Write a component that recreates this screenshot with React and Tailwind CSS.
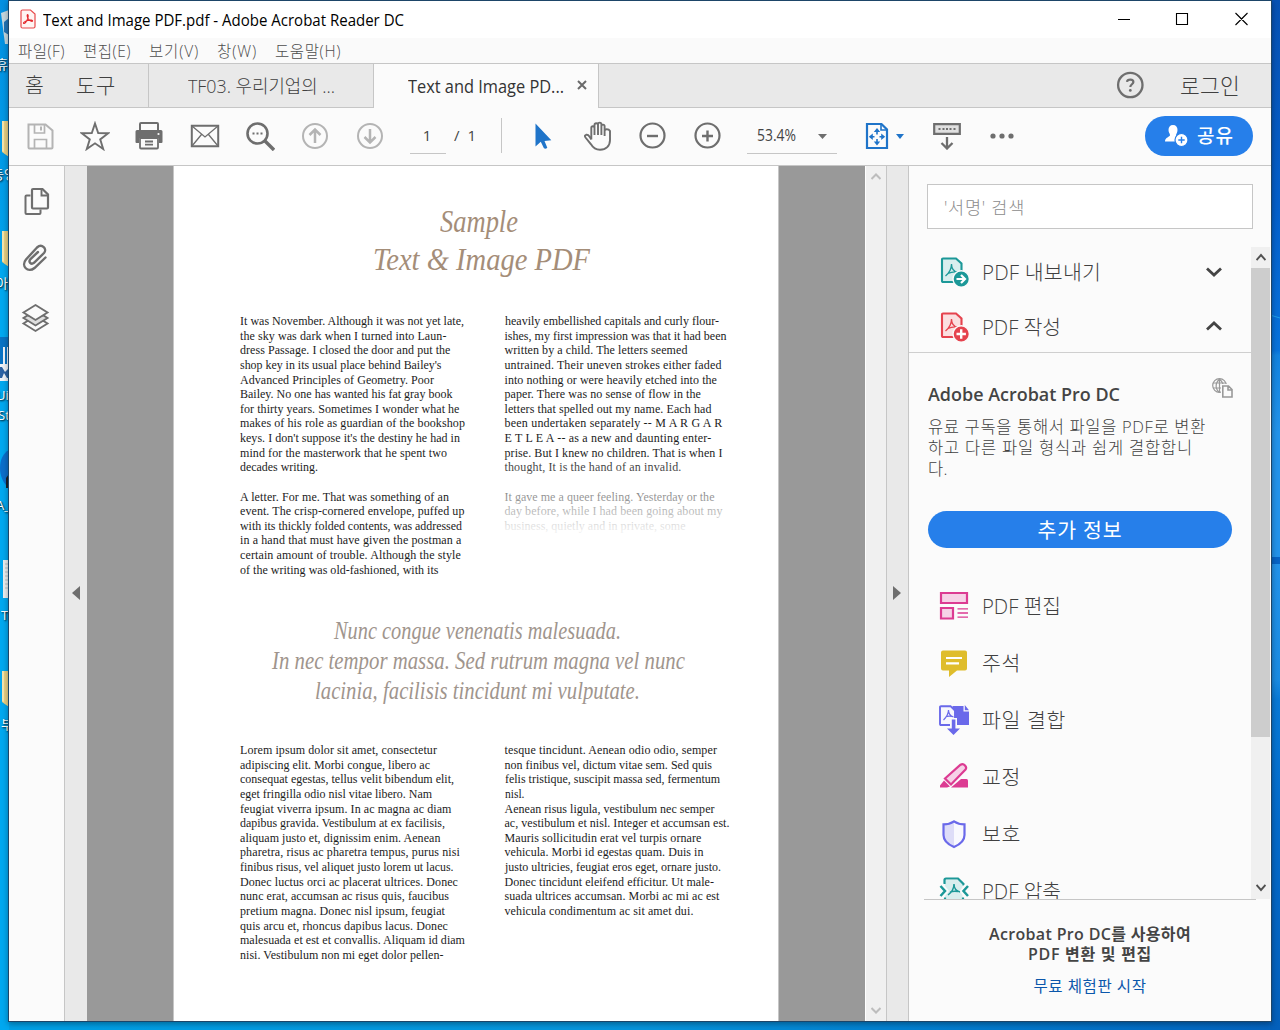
import { useLayoutEffect, useRef, useState } from "react";

/* Single line of text fitted to `w` pixels: tracked out when short, condensed when long. */
function T({ w, className = "", children }) {
  const ref = useRef(null);
  const [style, setStyle] = useState({});
  useLayoutEffect(() => {
    const natural = ref.current.getBoundingClientRect().width;
    if (natural > w) {
      setStyle({ width: w + "px", transform: `scaleX(${w / natural})` });
    } else {
      setStyle({ letterSpacing: (w - natural) / String(children).length + "px" });
    }
  }, []);
  return (
    <span ref={ref} className={"inline-block shrink-0 origin-left whitespace-pre " + className} style={style}>
      {children}
    </span>
  );
}

function Svg({ s = 30, className = "", children }) {
  return (
    <svg width={s} height={s} viewBox={`0 0 ${s} ${s}`} fill="none" className={"shrink-0 " + className}>
      {children}
    </svg>
  );
}

function Slot({ children }) {
  return <div className="flex w-[55px] shrink-0 justify-center">{children}</div>;
}

const Acro = ({ c, t, sw = 1.3 }) => (
  <path transform={t} d="M5.6 0.8c1.2 0 .9 3.2-.2 5.7C4.300 9 2 12 .9 11.600c-1.200-.6 1-2.900 4.800-3.800 3.500-.8 6.400-.4 6 .8-.5 1.200-3.600-.3-5.300-2.700C5 4 4.600.8 5.600.8z" stroke={c} strokeWidth={sw} />
);

function Desktop() {
  const label = "absolute whitespace-pre text-[13px] leading-[16px] text-white [text-shadow:1px_1px_2px_#000]";
  return (
    <div className="absolute inset-y-0 left-0 w-[9px] overflow-hidden bg-[#00a8f0]">
      <div className="absolute left-0 top-0 h-[260px] w-[9px] bg-linear-to-b from-[#0490e2] to-[#00a2ec]" />
      <svg className="absolute left-0 top-0" width="9" height="740" viewBox="0 0 9 740">
        <path d="M1 13l8-3v34H5z" fill="#c6d8df" />
        <path d="M4 22l5-4v17l-5-3z" fill="#2375b8" />
        <path d="M2 121h7v36l-7-5zM2 231h7v36l-7-5zM2 671h7v36l-7-5z" fill="#e8d083" />
        <path d="M2 121h2v31l-2-1zM2 231h2v31l-2-1zM2 671h2v31l-2-1z" fill="#f4e6b0" />
        <path d="M0 337h9v44H0z" fill="#0873c4" />
        <path d="M3 347h2v18H3zM7 347h2v18H7zM0 364h9v17H0z" fill="#eef3f8" />
        <path d="M0 367h2l3 5 4-4v10H7l-3-5-2 5H0z" fill="#2b62a3" />
        <path d="M9 450c-6 3-9 10-9 18s3 14 7 18h2z" fill="#0b6fcb" />
        <path d="M6 478l3-4v14H6z" fill="#1c2227" />
        <path d="M3 560h6v38H3z" fill="#eceff0" />
        <path d="M5 564h4M5 568h4M5 572h4M5 576h4M5 580h4M5 584h4M5 588h4" stroke="#b9c0c4" />
      </svg>
      <span className={label + " left-[-4px] top-[56px] font-['Noto_Sans_CJK_KR',sans-serif]"}>휴</span>
      <span className={label + " left-[-8px] top-[166px] font-['Noto_Sans_CJK_KR',sans-serif]"}>동영</span>
      <span className={label + " left-[-4px] top-[275px] font-['Noto_Sans_CJK_KR',sans-serif]"}>아</span>
      <span className={label + " left-[-4px] top-[387px] font-['Open_Sans',sans-serif]"}>Ui</span>
      <span className={label + " left-[-2px] top-[407px] font-['Open_Sans',sans-serif]"}>St</span>
      <span className={label + " left-[-4px] top-[497px] font-['Open_Sans',sans-serif]"}>A_</span>
      <span className={label + " left-[1px] top-[607px] font-['Open_Sans',sans-serif]"}>T</span>
      <span className={label + " left-[1px] top-[716px] font-['Noto_Sans_CJK_KR',sans-serif]"}>부</span>
    </div>
  );
}

function Wallpaper() {
  return (
    <svg className="absolute right-0 top-0" width="10" height="1030" viewBox="0 0 10 1030">
      <defs>
        <linearGradient id="wall" x1="0" y1="0" x2="0" y2="1">
          <stop offset="0" stopColor="#0752b4" />
          <stop offset=".2" stopColor="#0460cb" />
          <stop offset=".34" stopColor="#0873dc" />
          <stop offset=".345" stopColor="#1283e0" />
          <stop offset=".42" stopColor="#2393ea" />
          <stop offset=".54" stopColor="#2393ea" />
          <stop offset=".66" stopColor="#1a8be2" />
          <stop offset=".68" stopColor="#0879d6" />
          <stop offset=".8" stopColor="#046bcb" />
          <stop offset="1" stopColor="#0460bb" />
        </linearGradient>
      </defs>
      <path d="M0 0h10v1030H0z" fill="url(#wall)" />
      <path d="M0 557h10v7H0z" fill="#0764c6" />
      <path d="M0 315l10 3" stroke="#1fa0ea" />
    </svg>
  );
}

function TitleBar() {
  return (
    <div className="flex h-[37px] items-center bg-white">
      <svg width="16" height="20" viewBox="0 0 16 20" fill="none" className="ml-[11px] -translate-y-px">
        <path d="M2.500 1h8L15 5v12.500q0 1.500-1.500 1.500h-11Q1 19 1 17.500v-15Q1 1 2.500 1z" fill="#fff4f2" stroke="#e8494a" strokeWidth="1.200" />
        <Acro c="#e4282c" t="translate(3 5) scale(.82)" sw={1.3} />
      </svg>
      <T w={361} className="ml-[7px] text-[16px] leading-[24px] text-black">Text and Image PDF.pdf - Adobe Acrobat Reader DC</T>
      <svg width="132" height="14" viewBox="0 0 132 14" fill="none" stroke="#000" className="ml-auto mr-[22px] -translate-y-px">
        <path d="M1 7.500h12M59.500 1.500h11v11h-11zM118.500 1l12 12M130.500 1l-12 12" strokeWidth="1.100" />
      </svg>
    </div>
  );
}

function MenuBar() {
  const c = "text-[15.5px] leading-[24px] text-[#4d4d4d] font-light";
  return (
    <div className="flex h-[25px] items-center gap-[18px] bg-[#fafafa] pl-[9px]">
      <T w={47} className={c}>파일(F)</T>
      <T w={48} className={c}>편집(E)</T>
      <T w={50} className={c}>보기(V)</T>
      <T w={40} className={c}>창(W)</T>
      <T w={66} className={c}>도움말(H)</T>
    </div>
  );
}

function Tabs() {
  return (
    <div className="flex h-[45px] border-t border-[#c6c6c6] bg-[#e9e9e9] text-[#404040]">
      <div className="flex w-[140px] items-start border-r border-b border-[#c6c6c6] pt-[6px] pl-[16px]">
        <T w={20} className="text-[20.5px] leading-[30px] font-light">홈</T>
        <T w={40} className="ml-[31px] text-[21px] leading-[30px] font-light">도구</T>
      </div>
      <div className="flex w-[225px] items-center border-r border-b border-[#c6c6c6] pl-[39px]">
        <T w={147} className="text-[18px] leading-[24px] font-light">TF03. 우리기업의 ...</T>
      </div>
      <div className="flex w-[225px] items-center border-r border-[#c6c6c6] bg-[#fbfbfb] pl-[34px]">
        <T w={156} className="text-[17.500px] leading-[24px] text-[#333]">Text and Image PD...</T>
        <svg width="10" height="10" viewBox="0 0 10 10" stroke="#6a6a6a" strokeWidth="2" className="ml-[13px] -translate-y-px">
          <path d="M1 1l8 8M9 1L1 9" />
        </svg>
      </div>
      <div className="flex flex-1 items-center border-b border-[#c6c6c6]">
        <Svg s={28} className="ml-[517px] -translate-y-px">
          <circle cx="14.300" cy="14" r="12.200" stroke="#6e6e6e" strokeWidth="2.300" />
          <path d="M11 10.800c.4-2.800 6.400-2.900 6.400.3 0 2.100-3.100 2.300-3.100 4.900" stroke="#6e6e6e" strokeWidth="2.200" />
          <circle cx="14.300" cy="19.400" r="1.400" fill="#6e6e6e" />
        </Svg>
        <T w={60} className="ml-[36px] text-[21.500px] leading-[30px] font-light">로그인</T>
      </div>
    </div>
  );
}

const G = "#6e6e6e";
const L = "#b4b4b4";
const B = "#1f74c9";

function Toolbar() {
  return (
    <div className="flex h-[58px] items-center border-b border-[#c6c6c6] bg-[#fbfbfb] pb-[2px] pl-[3px]">
      <Slot>
        <Svg>
          <path d="M3.500 3.500h17l7 6v17q0 1-1 1h-22q-1 0-1-1z" stroke={L} strokeWidth="2" />
          <path d="M9.500 3.500v8.500h10V3.500M9.500 27v-8.500h12V27" stroke={L} strokeWidth="1.700" />
          <path d="M15 5.500h2v4h-2z" fill={L} />
        </Svg>
      </Slot>
      <Slot>
        <Svg>
          <path d="M15 2.500l3.200 9.500 10 .2-8 6.200 3 9.600-8.200-5.700L6.800 28l3-9.600-8-6.200 10-.2z" stroke={G} strokeWidth="1.900" />
        </Svg>
      </Slot>
      <Slot>
        <Svg className="-translate-x-px">
          <path d="M6 9V3q0-1 1-1h16q1 0 1 1v6" stroke={G} strokeWidth="2" />
          <path d="M3 9h24q1.500 0 1.500 1.500V21q0 1-1 1H25v-5H5v5H2.500q-1 0-1-1V10.500Q1.500 9 3 9z" fill={G} />
          <path d="M6 17v9.500q0 1 1 1h16q1 0 1-1V17zM11 20.500h8M11 23.700h8" stroke={G} strokeWidth="1.800" />
          <circle cx="24.500" cy="13" r="1.100" fill="#fbfbfb" />
        </Svg>
      </Slot>
      <Slot>
        <Svg>
          <path d="M1.800 4.800h26.400v20.400H1.800z" stroke={G} strokeWidth="2" />
          <path d="M2 5l13 11L28 5M2 25l9.500-11.500M28 25l-9.500-11.500" stroke={G} strokeWidth="1.300" />
        </Svg>
      </Slot>
      <Slot>
        <Svg>
          <circle cx="12.500" cy="12.500" r="10" stroke={G} strokeWidth="2.600" />
          <path d="M20 20l9 9" stroke={G} strokeWidth="3.400" />
          <path d="M7.500 12.500h2M11.500 12.500h2M15.500 12.500h2" stroke={G} strokeWidth="2" />
        </Svg>
      </Slot>
      <Slot>
        <Svg>
          <circle cx="15" cy="15" r="12" stroke={L} strokeWidth="2" />
          <path d="M15 22V9M9.500 14l5.500-5.500 5.500 5.500" stroke={L} strokeWidth="2.500" />
        </Svg>
      </Slot>
      <Slot>
        <Svg>
          <circle cx="15" cy="15" r="12" stroke={L} strokeWidth="2" />
          <path d="M15 8v13M9.500 16l5.500 5.500 5.500-5.500" stroke={L} strokeWidth="2.500" />
        </Svg>
      </Slot>
      <div className="ml-[13px] mt-[4px] flex h-[33px] w-[36px] items-center justify-center border-b border-[#c6c6c6] pr-[2px] pb-[3px] text-[15px] text-[#444]">1</div>
      <T w={22} className="ml-[8px] text-[15px] text-[#444]">{"/  1"}</T>
      <div className="ml-[25px] h-[35px] w-px bg-[#c6c6c6]" />
      <div className="ml-[13px] flex">
        <Slot>
          <Svg>
            <path d="M7.500 2.500v23l5.300-4.700 3 6.200q1.500 1.500 3.500-.2l-2.800-6.700 6.800-.8z" fill={B} />
          </Svg>
        </Slot>
        <Slot>
          <Svg>
            <path d="M8.300 18.500V7q0-1.700 1.600-1.700T11.500 7v7M11.500 14V4q0-1.700 1.700-1.700T15 4v10M15 14V3.200q0-1.600 1.700-1.600t1.700 1.600V14M18.400 14V5.200q0-1.600 1.600-1.600t1.600 1.600V15M21.600 10q0-1.800 2.200-1.800T27 10v9c0 6-4 9.800-10 9.800-4.500 0-7-2-9-5.500L2.500 16.500q-1.500-2 .6-2.700 2-.4 3.300 1.700l2 3" stroke={G} strokeWidth="1.900" />
          </Svg>
        </Slot>
        <Slot>
          <Svg>
            <circle cx="14.500" cy="14.500" r="12" stroke={G} strokeWidth="2.200" />
            <path d="M9 15h11" stroke={G} strokeWidth="2.400" />
          </Svg>
        </Slot>
        <Slot>
          <Svg>
            <circle cx="14.500" cy="14.500" r="12" stroke={G} strokeWidth="2.200" />
            <path d="M9 15h11M14.500 9.500v11" stroke={G} strokeWidth="2.400" />
          </Svg>
        </Slot>
      </div>
      <div className="ml-[12px] mt-[4px] flex h-[33px] w-[90px] items-center border-b border-[#c6c6c6] pb-[2px] pl-[10px]">
        <T w={39} className="text-[15.500px] text-[#444]">53.4%</T>
        <svg width="9" height="5" viewBox="0 0 9 5" className="ml-[22px]"><path d="M0 0h9L4.500 5z" fill={G} /></svg>
      </div>
      <svg width="24" height="28" viewBox="0 0 24 28" fill="none" className="ml-[28px]">
        <path d="M2 2h14.500L22 7.500V26H2z" stroke={B} strokeWidth="2.200" />
        <path d="M16 2v6h6" stroke={B} strokeWidth="1.600" />
        <path d="M12 8v4.500M12 17v4M5 14.800h4.500M14.500 14.800H19" stroke={B} strokeWidth="1.600" />
        <path d="M12 6l3.200 4H8.800zM12 23.500l3.200-4H8.800zM3.800 14.800l4-3.200v6.400zM20.200 14.800l-4-3.200v6.400z" fill={B} />
      </svg>
      <svg width="8" height="5" viewBox="0 0 8 5" className="ml-[7px] translate-y-px"><path d="M0 0h8L4 5z" fill={B} /></svg>
      <svg width="28" height="28" viewBox="0 0 28 28" fill="none" className="ml-[29px]">
        <path d="M1.200 2.200h25.600v9.600H1.200z" fill="#e0e0e0" stroke={G} strokeWidth="2.200" />
        <path d="M5.500 7h2M9.500 7h2M13 7h2M16.500 7h2M20.500 7h2" stroke={G} strokeWidth="2" />
        <path d="M14 15v11M8.500 21l5.500 5.500 5.500-5.500" stroke={G} strokeWidth="2.300" />
      </svg>
      <svg width="24" height="6" viewBox="0 0 24 6" className="ml-[29px]" fill={G}>
        <circle cx="3" cy="3" r="2.600" /><circle cx="12" cy="3" r="2.600" /><circle cx="21" cy="3" r="2.600" />
      </svg>
      <div className="ml-[131px] flex h-[40px] w-[108px] items-center rounded-full bg-[#267fea] pl-[20px]">
        <svg width="24" height="24" viewBox="0 0 24 24">
          <path d="M8 1c3 0 4.500 2 4.500 5 0 2.500-1.500 4-1.500 5.500 0 1.800 4.500 2 4.500 6H0c0-4.500 5-4.500 5-6.300C5 9.500 3.500 8.500 3.500 6 3.500 3 5 1 8 1z" fill="#fff" />
          <circle cx="16.500" cy="16" r="6.500" fill="#fff" stroke="#267fea" strokeWidth="1.200" />
          <path d="M16.500 12.800v6.400M13.300 16h6.400" stroke="#267fea" strokeWidth="1.400" />
        </svg>
        <T w={37} className="ml-[8px] text-[19px] leading-[28px] font-medium text-white">공유</T>
      </div>
    </div>
  );
}

function LeftRail() {
  return (
    <div className="flex w-[56px] shrink-0 flex-col items-start border-r border-[#c6c6c6] bg-[#fbfbfb] pl-[12px] pt-[21px]">
      <Svg>
        <path d="M9.500 8.500H5.500q-1 0-1 1V26q0 1 1 1h13q1 0 1-1v-3.500" stroke={G} strokeWidth="2" />
        <path d="M12 2h9.500l5.500 5.500v13q0 1-1 1H12q-1 0-1-1V3q0-1 1-1z" fill="#fbfbfb" stroke={G} strokeWidth="2.200" />
        <path d="M20.500 2v6.500H27" stroke={G} strokeWidth="1.900" />
      </Svg>
      <Svg className="mt-[25px] -translate-x-px">
        <path d="M25.500 15.500L14.500 26c-6.500 5.500-14-2-8.500-8.500L17 5.500c5-4.500 10.500 1.500 7 5.500L14 20.800c-3 2.200-6-.8-3.500-3.800l7.500-7" stroke={G} strokeWidth="2.400" strokeLinecap="round" />
      </Svg>
      <Svg className="mt-[31px] -translate-x-px">
        <path d="M3.500 20.500L15.500 28l12-7.500-4-2.500h-16z" fill="#fbfbfb" stroke={G} strokeWidth="1.900" />
        <path d="M3.500 15L15.500 22.500l12-7.500-4-2.500h-16z" fill="#dedede" stroke={G} strokeWidth="1.900" />
        <path d="M15.500 2l12 7.500-12 7.500-12-7.500z" fill="#fbfbfb" stroke={G} strokeWidth="1.900" />
      </Svg>
    </div>
  );
}

const TOP_LEFT = [
  ["It was November. Although it was not yet late,", 224],
  ["the sky was dark when I turned into Laun-", 206.5],
  ["dress Passage. I closed the door and put the", 210.5],
  ["shop key in its usual place behind Bailey's", 201.5],
  ["Advanced Principles of Geometry. Poor", 194],
  ["Bailey. No one has wanted his fat gray book", 212.5],
  ["for thirty years. Sometimes I wonder what he", 219.5],
  ["makes of his role as guardian of the bookshop", 225],
  ["keys. I don't suppose it's the destiny he had in", 220],
  ["mind for the masterwork that he spent two", 207],
  ["decades writing.", 78],
  ["", 0],
  ["A letter. For me. That was something of an", 209],
  ["event. The crisp-cornered envelope, puffed up", 224.5],
  ["with its thickly folded contents, was addressed", 222],
  ["in a hand that must have given the postman a", 221.5],
  ["certain amount of trouble. Although the style", 221],
  ["of the writing was old-fashioned, with its", 198.5],
];
const TOP_RIGHT = [
  ["heavily embellished capitals and curly flour-", 214],
  ["ishes, my first impression was that it had been", 222],
  ["written by a child. The letters seemed", 183],
  ["untrained. Their uneven strokes either faded", 217],
  ["into nothing or were heavily etched into the", 212.5],
  ["paper. There was no sense of flow in the", 196.5],
  ["letters that spelled out my name. Each had", 207],
  ["been undertaken separately -- M A R G A R", 218],
  ["E T L E A -- as a new and daunting enter-", 207],
  ["prise. But I knew no children. That is when I", 218],
  ["thought, It is the hand of an invalid.", 177],
  ["", 0],
  ["It gave me a queer feeling. Yesterday or the", 210],
  ["day before, while I had been going about my", 218],
  ["business, quietly and in private, some", 181],
];
const LOW_LEFT = [
  ["Lorem ipsum dolor sit amet, consectetur", 197],
  ["adipiscing elit. Morbi congue, libero ac", 190],
  ["consequat egestas, tellus velit bibendum elit,", 214],
  ["eget fringilla odio nisl vitae libero. Nam", 192],
  ["feugiat viverra ipsum. In ac magna ac diam", 211.5],
  ["dapibus gravida. Vestibulum at ex facilisis,", 205],
  ["aliquam justo et, dignissim enim. Aenean", 200.5],
  ["pharetra, risus ac pharetra tempus, purus nisi", 220],
  ["finibus risus, vel aliquet justo lorem ut lacus.", 213.5],
  ["Donec luctus orci ac placerat ultrices. Donec", 218],
  ["nunc erat, accumsan ac risus quis, faucibus", 209],
  ["pretium magna. Donec nisl ipsum, feugiat", 205],
  ["quis arcu et, rhoncus dapibus lacus. Donec", 208],
  ["malesuada et est et convallis. Aliquam id diam", 225],
  ["nisi. Vestibulum non mi eget dolor pellen-", 203.5],
];
const LOW_RIGHT = [
  ["tesque tincidunt. Aenean odio odio, semper", 212.5],
  ["non finibus vel, dictum vitae sem. Sed quis", 207.5],
  ["felis tristique, suscipit massa sed, fermentum", 215],
  ["nisl.", 19.5],
  ["Aenean risus ligula, vestibulum nec semper", 210],
  ["ac, vestibulum et nisl. Integer et accumsan est.", 225],
  ["Mauris sollicitudin erat vel turpis ornare", 197],
  ["vehicula. Morbi id egestas quam. Duis in", 199],
  ["justo ultricies, feugiat eros eget, ornare justo.", 216],
  ["Donec tincidunt eleifend efficitur. Ut male-", 209.5],
  ["suada ultrices accumsan. Morbi ac mi ac est", 215],
  ["vehicula condimentum ac sit amet dui.", 189],
];

function Column({ lines, className = "" }) {
  return (
    <div className={"flex flex-col items-start text-[12px] leading-[14.63px] text-[#1c1c1c] " + className}>
      {lines.map(([text, w], i) =>
        text ? <T key={i} w={w}>{text}</T> : <div key={i} className="h-[14.63px]" />
      )}
    </div>
  );
}

function Page() {
  return (
    <div className="h-full w-[606px] shrink-0 overflow-hidden border-x border-[#c6c6c6] bg-white pl-[66px] pt-[37px] font-['Liberation_Serif',serif]">
      <div className="flex w-[478px] flex-col items-center text-[31px] leading-[38px] text-[#a48d78] italic">
        <T w={78}>Sample</T>
        <T w={217} className="ml-[4px]">{"Text & Image PDF"}</T>
      </div>
      <div className="mt-[35px] flex h-[264px]">
        <Column lines={TOP_LEFT} className="w-[264.5px]" />
        <div className="relative">
          <Column lines={TOP_RIGHT} />
          <div className="absolute -left-px right-0 top-[140px] h-[84px] bg-linear-to-b from-white/0 via-white/50 via-50% to-white" />
        </div>
      </div>
      <div className="mt-[38px] flex w-[474px] flex-col items-center text-[24.500px] leading-[30px] text-[#9f958d] italic">
        <T w={287}>Nunc congue venenatis malesuada.</T>
        <T w={413} className="ml-[2px]">In nec tempor massa. Sed rutrum magna vel nunc</T>
        <T w={325}>lacinia, facilisis tincidunt mi vulputate.</T>
      </div>
      <div className="mt-[37px] flex">
        <Column lines={LOW_LEFT} className="w-[264.5px]" />
        <Column lines={LOW_RIGHT} />
      </div>
    </div>
  );
}

function DocumentArea() {
  return (
    <>
      <div className="flex w-[22px] shrink-0 items-center justify-center bg-[#e9e9e9] pb-[2px]">
        <svg width="8" height="14" viewBox="0 0 8 14"><path d="M8 0v14L0 7z" fill={G} /></svg>
      </div>
      <div className="flex w-[778px] shrink-0 bg-[#999] pl-[86px]"><Page /></div>
      <div className="flex w-[22px] shrink-0 flex-col items-center justify-between border-r border-l border-r-[#c6c6c6] border-l-white bg-[#f0f0f0] py-[7px]">
        <svg width="10" height="7" viewBox="0 0 10 7" fill="none"><path d="M.5 6L5 1.500 9.500 6" stroke="#bdbdbd" strokeWidth="2" /></svg>
        <svg width="10" height="7" viewBox="0 0 10 7" fill="none"><path d="M.5 1L5 5.500 9.500 1" stroke="#bdbdbd" strokeWidth="2" /></svg>
      </div>
      <div className="flex w-[22px] shrink-0 items-center justify-center border-r border-[#c6c6c6] bg-[#e9e9e9] pr-[2px] pb-[2px]">
        <svg width="8" height="14" viewBox="0 0 8 14"><path d="M0 0v14l8-7z" fill={G} /></svg>
      </div>
    </>
  );
}

function DocBadge({ c, bg, children }) {
  return (
    <Svg>
      <path d="M4 1.500h13l5.500 5v18.500H4q-1 0-1-1V2.500q0-1 1-1z" fill={bg} stroke={c} strokeWidth="2.100" />
      <path d="M12.500 7c0 6-3 9.500-6 12M12.500 7c0 5.500 3 8 7 9M9 16.500c3-1.500 6-2 9.500-1.500" stroke={c} strokeWidth="1.300" />
      <circle cx="22.200" cy="22" r="8.200" fill={c} stroke="#fbfbfb" strokeWidth="1.400" />
      {children}
    </Svg>
  );
}

const P = "#dc3b92";
const V = "#6a69ea";
const TEAL = "#1c9898";

const EditIcon = (
  <Svg>
    <path d="M2 2h26v10H2zM2 17h12v10.500H2z" fill="#f6d2e7" stroke={P} strokeWidth="2.200" />
    <path d="M18.500 17.800H29M18.500 22H29M18.500 26.200H29" stroke={P} strokeWidth="1.300" />
  </Svg>
);
const CommentIcon = (
  <Svg>
    <path d="M4 2.500h22q2 0 2 2v16q0 2-2 2h-8L10 29v-6.500H4q-2 0-2-2v-16q0-2 2-2z" fill="#dfbd2c" />
    <path d="M7 10h16M7 15.300h13" stroke="#fff" strokeWidth="2.200" />
  </Svg>
);
const CombineIcon = (
  <Svg>
    <path d="M13.500 1h11v5.500H30V20H13.500zM25.800 0v5.200H30z" fill={V} />
    <path d="M2 1.200h9.500l4.500 4.500V20H2q-1 0-1-1V2.200q0-1 1-1z" fill="#f7f7fd" stroke={V} strokeWidth="1.900" />
    <path d="M9.500 5c0 4-2 7-5 10M9.500 5c0 4 2 6 5 7M6.500 12c2-1 4-1 6.500-.5" stroke={V} strokeWidth="1.200" />
    <path d="M11 13h7v9.500h5L14.500 31.500 6 22.500h5z" fill="#fbfbfb" />
    <path d="M12.800 14.500h3.600v9h4.600L14.500 30 8 23.500h4.800z" fill={V} />
  </Svg>
);
const RedactIcon = (
  <Svg>
    <path d="M22 17h5.500q1.500 0 1.500 1.500v7H12z" fill={P} />
    <path d="M6 16.500L21.500 2.700q2.500-1.500 4.500.7t.5 4.200L12 22.500z" fill="#f6d2e7" stroke={P} strokeWidth="2.200" />
    <path d="M5 18.500l6 6-3 1H1v-2z" fill={P} />
  </Svg>
);
const ShieldIcon = (
  <Svg>
    <path d="M15 2.300c3 2 6.500 3 10.500 3V16c0 6-4.500 9.500-10.500 12C9 25.500 4.500 22 4.500 16V5.300c4 0 7.500-1 10.500-3z" fill="#f8f8fe" />
    <path d="M15 2.300V28C9 25.500 4.500 22 4.500 16V5.300c4 0 7.500-1 10.500-3z" fill="#dddcf8" />
    <path d="M15 2.300c3 2 6.500 3 10.500 3V16c0 6-4.500 9.500-10.500 12C9 25.500 4.500 22 4.500 16V5.300c4 0 7.500-1 10.500-3z" stroke={V} strokeWidth="2.200" />
  </Svg>
);
const CompressIcon = (
  <Svg>
    <path d="M6 4h12.500L23.500 8v18H6z" fill="#d8eeee" />
    <path d="M5.500 8V4q0-1.500 1.500-1.500h12L24.500 8v1.500M6 21.500v6h18v-6" stroke={TEAL} strokeWidth="2.200" />
    <path d="M0 7.500h4l6 7.500-6 7.500H0zM30 7.500h-3.500l-6 7.500 6 7.500H30z" fill="#fbfbfb" />
    <path d="M15 8c0 5-2 8-6 11M15 8c0 5 2.500 7 6 8M11 16c3-1 5-1 8-.5" stroke={TEAL} strokeWidth="1.500" />
    <path d="M1.500 10l4.500 5-4.500 5M29 10l-4.500 5 4.500 5" stroke={TEAL} strokeWidth="2.500" />
  </Svg>
);

const TOOLS = [
  [EditIcon, "PDF 편집", 79],
  [CommentIcon, "주석", 39],
  [CombineIcon, "파일 결합", 84],
  [RedactIcon, "교정", 39],
  [ShieldIcon, "보호", 39],
  [CompressIcon, "PDF 압축", 79],
];

function RightPanel() {
  const label = "text-[20.500px] leading-[30px] font-light text-[#404040]";
  return (
    <div className="flex min-w-0 flex-1 flex-col bg-[#fbfbfb]">
      <div className="mx-[18px] mt-[18px] flex h-[45px] shrink-0 items-center border border-[#c6c6c6] bg-white pl-[16px]">
        <T w={81} className="text-[17.500px] leading-[24px] font-light text-[#8c8c8c]">'서명' 검색</T>
      </div>
      <div className="mt-[18px] flex h-[652px] shrink-0">
        <div className="flex w-[342px] flex-col overflow-hidden">
          <div className="flex h-[106px] shrink-0 flex-col border-b border-[#cfcfcf]">
            <div className="flex h-[50px] items-center pl-[30px]">
              <DocBadge c={TEAL} bg="#d8eeee">
                <path d="M17.500 22h8M22 18l4 4-4 4" stroke="#fff" strokeWidth="2.200" />
              </DocBadge>
              <T w={119} className={label + " ml-[13px]"}>PDF 내보내기</T>
              <svg width="16" height="10" viewBox="0 0 16 10" fill="none" className="ml-[105px]"><path d="M1 1.500l7 6.500 7-6.500" stroke="#444" strokeWidth="2.800" /></svg>
            </div>
            <div className="mt-[6px] flex h-[50px] items-center pl-[30px]">
              <DocBadge c="#e5434e" bg="#fbdfe0">
                <path d="M17.500 22h9.400M22.200 17.300v9.400" stroke="#fff" strokeWidth="2.400" />
              </DocBadge>
              <T w={79} className={label + " ml-[13px]"}>PDF 작성</T>
              <svg width="16" height="10" viewBox="0 0 16 10" fill="none" className="ml-[145px] -translate-y-px"><path d="M1 8.500L8 2l7 6.500" stroke="#444" strokeWidth="2.800" /></svg>
            </div>
          </div>
          <div className="mt-[26px] flex h-[30px] shrink-0 pl-[19px]">
            <T w={192} className="text-[18px] leading-[30px] font-semibold text-[#444]">Adobe Acrobat Pro DC</T>
            <svg width="21" height="20" viewBox="0 0 21 20" fill="none" stroke="#999" strokeWidth="1.200" className="ml-[92px] -translate-y-px">
              <circle cx="7.500" cy="7.500" r="6.800" />
              <path d="M1 5h13M1 10h11M7.500 1v13M7.500 1C3 5 3 11 7.500 14.500M7.500 1c3 3 4 6 3.500 8" />
              <path d="M10.500 7.500h6l3.500 3.500v8h-9.500z" fill="#fbfbfb" stroke="#fbfbfb" strokeWidth="3" />
              <path d="M10.800 8h5.700l3.500 3.500V19h-9.200zM16 8v4h4" strokeWidth="1.600" />
            </svg>
          </div>
          <div className="mt-[7px] flex shrink-0 flex-col items-start pl-[19px] text-[16.500px] leading-[21px] font-light text-[#404040]">
            <T w={278}>유료 구독을 통해서 파일을 PDF로 변환</T>
            <T w={265}>하고 다른 파일 형식과 쉽게 결합합니</T>
            <T w={20}>다.</T>
          </div>
          <div className="mt-[32px] ml-[19px] flex h-[37px] w-[304px] shrink-0 items-center justify-center rounded-full bg-[#267fea]">
            <T w={85} className="text-[20.500px] leading-[30px] text-white">추가 정보</T>
          </div>
          <div className="mt-[29px] flex shrink-0 flex-col">
            {TOOLS.map(([icon, name, w]) => (
              <div key={name} className="flex h-[57px] items-center pl-[30px]">
                {icon}
                <T w={w} className={label + " ml-[13px]"}>{name}</T>
              </div>
            ))}
          </div>
        </div>
        <div className="flex w-[19px] flex-col items-center bg-[#f0f0f0]">
          <svg width="10" height="8" viewBox="0 0 10 8" fill="none" className="mt-[7px] mb-[6px] shrink-0 -translate-y-px"><path d="M.5 7L5 2l4.500 5" stroke="#505050" strokeWidth="1.900" /></svg>
          <div className="h-[469px] w-full bg-[#cdcdcd]" />
          <svg width="10" height="8" viewBox="0 0 10 8" fill="none" className="mt-auto mb-[7px] shrink-0"><path d="M.5 1L5 6l4.500-5" stroke="#505050" strokeWidth="1.900" /></svg>
        </div>
      </div>
      <div className="mr-[15px] ml-[15px] flex flex-1 flex-col items-center border-t border-[#c6c6c6] pt-[24px]">
        <T w={202} className="text-[16px] leading-[20px] font-semibold text-[#444]">Acrobat Pro DC를 사용하여</T>
        <T w={124} className="text-[16px] leading-[20px] font-semibold text-[#444]">PDF 변환 및 편집</T>
        <T w={113} className="mt-[12px] text-[15.500px] leading-[20px] text-[#0b57ab]">무료 체험판 시작</T>
      </div>
    </div>
  );
}

export default function App() {
  return (
    <div className="relative h-[1030px] w-[1280px] overflow-hidden bg-linear-to-r from-[#00a0e6] via-[#0794dc] to-[#0463bf] font-['Open_Sans','Noto_Sans_CJK_KR',sans-serif]">
      <Desktop />
      <Wallpaper />
      <div className="relative ml-[8px] flex h-[1022px] w-[1264px] flex-col border border-[#1d4568] bg-[#fbfbfb] shadow-[0_2px_6px_rgba(0,0,0,0.35)]">
        <TitleBar />
        <MenuBar />
        <Tabs />
        <Toolbar />
        <div className="flex min-h-0 flex-1">
          <LeftRail />
          <DocumentArea />
          <RightPanel />
        </div>
      </div>
    </div>
  );
}
